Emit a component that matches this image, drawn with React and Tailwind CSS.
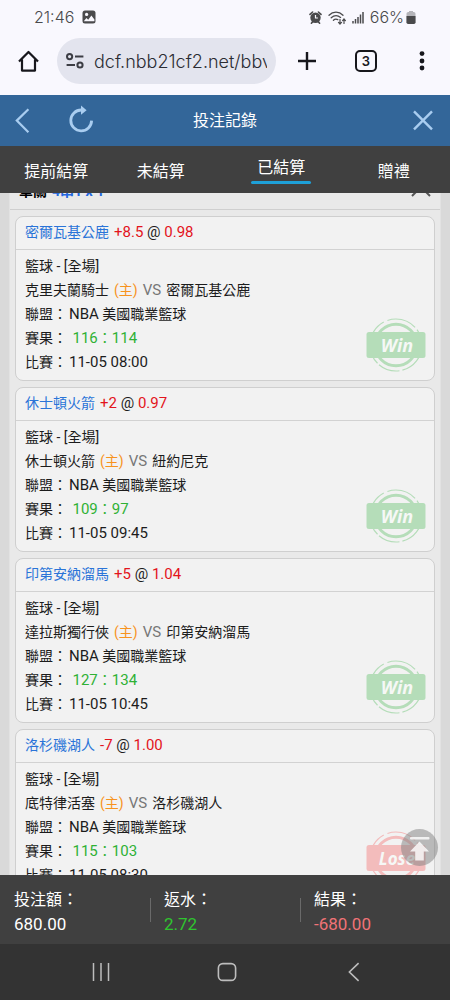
const TABS = [
  { label: "提前結算" },
  { label: "未結算", extra: "pr-4" },
  { label: "已結算", active: true },
  { label: "贈禮" },
];

const BETS = [
  {
    pick: "密爾瓦基公鹿",
    line: "+8.5",
    odds: "0.98",
    home: "克里夫蘭騎士",
    away: "密爾瓦基公鹿",
    score: ["116", "114"],
    time: "11-05 08:00",
    result: "Win",
  },
  {
    pick: "休士頓火箭",
    line: "+2",
    odds: "0.97",
    home: "休士頓火箭",
    away: "紐約尼克",
    score: ["109", "97"],
    time: "11-05 09:45",
    result: "Win",
  },
  {
    pick: "印第安納溜馬",
    line: "+5",
    odds: "1.04",
    home: "達拉斯獨行俠",
    away: "印第安納溜馬",
    score: ["127", "134"],
    time: "11-05 10:45",
    result: "Win",
  },
  {
    pick: "洛杉磯湖人",
    line: "-7",
    odds: "1.00",
    home: "底特律活塞",
    away: "洛杉磯湖人",
    score: ["115", "103"],
    time: "11-05 08:30",
    result: "Lose",
  },
];

const TOTALS = [
  { label: "投注額：", value: "680.00", color: "text-white" },
  { label: "返水：", value: "2.72", color: "text-[#2fc52f]" },
  { label: "結果：", value: "-680.00", color: "text-[#f07377]" },
];

function StatusBar() {
  return (
    <div className="flex h-[34px] items-center justify-between pl-[34px] pr-[34px] font-[Inter,sans-serif] text-[16px] font-light text-[#4a4a4c]">
      <div className="flex items-center gap-2">
        <span>21:46</span>
        <svg className="size-[14px]" viewBox="0 0 14 14">
          <rect x="0.5" y="0.5" width="13" height="13" rx="2.5" fill="#4a4a4c" />
          <circle cx="4.6" cy="4.4" r="1.6" fill="#f9f8fe" />
          <path d="M1.8 11.2 4.4 8l1.8 1.8L9.4 5.6l3 4v1.6z" fill="#f9f8fe" />
        </svg>
      </div>
      <div className="flex items-center gap-[6px]">
        <svg className="size-[13px]" viewBox="0 0 13 13">
          <path d="M1 3.4 3.6 1M12 3.4 9.4 1M2.4 12.2l1.4-1.6M10.6 12.2 9.2 10.6" stroke="#4a4a4c" strokeWidth="1.6" strokeLinecap="round" />
          <circle cx="6.5" cy="6.8" r="5.2" fill="#4a4a4c" />
          <path d="M6.5 4v3h2.4" fill="none" stroke="#f9f8fe" strokeWidth="1.2" />
        </svg>
        <svg className="h-[15px] w-[18px]" viewBox="0 0 18 15" fill="none" stroke="#4a4a4c" strokeWidth="1.3" strokeLinecap="round">
          <path d="M1 5.2C5 1.2 11 1.2 15 5.2M3.2 7.8c2.8-2.6 6.6-2.6 9.4-.4M5.4 10.2c1.3-1.2 3-1.4 4.4-.6" />
          <path d="M12 9.4v4.4m-1.5-1.4 1.5 1.6 1.5-1.6M16 13.4V9.2m-1.4 1.4L16 9l1.4 1.6" strokeWidth="1.2" />
        </svg>
        <svg className="h-[13px] w-[12px]" viewBox="0 0 12 13" stroke="#4a4a4c" strokeWidth="1.5">
          <path d="M1 10v2.6M3.5 8v4.6M6 6v6.6M8.5 3.4v9.2M11 1v11.6" />
        </svg>
        <div className="flex items-center gap-[2px]">
          <span>66%</span>
          <svg className="h-[13px] w-[10px]" viewBox="0 0 10 13">
            <path d="M3 0h4v1.2H3z" fill="#b5b5ba" />
            <rect x="0.5" y="1" width="9" height="12" rx="1.8" fill="#b5b5ba" />
            <path d="M0.5 5h9v6.2A1.8 1.8 0 0 1 7.7 13H2.3A1.8 1.8 0 0 1 .5 11.2z" fill="#4a4a4c" />
          </svg>
        </div>
      </div>
    </div>
  );
}

function BrowserBar() {
  return (
    <div className="flex h-[61px] items-start pl-[17px] pr-4 pt-1 text-[#17171c]">
      <button type="button" aria-label="Home" className="mt-[11px] size-6">
        <svg className="size-6" viewBox="0 0 24 24" fill="none" stroke="currentColor" strokeWidth="2.2" strokeLinejoin="round">
          <path d="M2 12.6 11.5 3l9.5 9.6M5 10.4v11.2h13V10.4" />
        </svg>
      </button>
      <label className="ml-4 flex h-[46px] min-w-0 flex-1 items-center gap-[10px] rounded-full bg-[#e3e4ee] px-[9px]">
        <svg className="size-[18px] shrink-0" viewBox="0 0 18 18" fill="none" stroke="#3c3d44" strokeWidth="2">
          <circle cx="3.6" cy="4.6" r="2.6" />
          <path d="M9 4.6h8.4M.6 13h8.4" />
          <circle cx="14" cy="13" r="2.6" />
        </svg>
        <input
          type="text"
          aria-label="Address"
          defaultValue="dcf.nbb21cf2.net/bbv"
          className="w-full min-w-0 bg-transparent font-[Inter,sans-serif] text-[18px] font-light text-[#2b2c33] outline-none"
        />
      </label>
      <button type="button" aria-label="New tab" className="ml-[19px] mt-[11px] size-6">
        <svg className="size-6" viewBox="0 0 24 24" stroke="currentColor" strokeWidth="2.4">
          <path d="M12 3v18M3 12h18" />
        </svg>
      </button>
      <button
        type="button"
        aria-label="Tabs"
        className="ml-9 mt-[12px] flex size-[22px] items-center justify-center rounded-[5px] border-2 border-current font-[Inter,sans-serif] text-[13px] font-semibold leading-none"
      >
        3
      </button>
      <button type="button" aria-label="More" className="ml-[33px] mt-[11px] size-6">
        <svg className="size-6" viewBox="0 0 24 24" fill="currentColor">
          <circle cx="12" cy="4.6" r="2.4" />
          <circle cx="12" cy="12" r="2.4" />
          <circle cx="12" cy="19" r="2.4" />
        </svg>
      </button>
    </div>
  );
}

function PageHeader() {
  return (
    <header className="flex h-[51px] shrink-0 items-center bg-[#336699] px-[10px] text-[#a9cdf0]">
      <div className="flex flex-1 items-center gap-[29px]">
        <button type="button" aria-label="返回" className="size-[28px]">
          <svg className="size-[28px]" viewBox="0 0 28 28" fill="none" stroke="currentColor" strokeWidth="2.2">
            <path d="M18.4 2.2 6.8 13.6l11.6 11.6" />
          </svg>
        </button>
        <button type="button" aria-label="重新整理" className="size-[28px]">
          <svg className="size-[28px] overflow-visible" viewBox="0 0 28 28" fill="none" stroke="currentColor" strokeWidth="2.8">
            <path d="M14.4 3A10.4 10.4 0 1 0 24.6 13.6" />
            <path d="M14 -1.6 19.6 3.2 14 7.8z" fill="currentColor" stroke="none" />
          </svg>
        </button>
      </div>
      <h1 className="text-[16px] text-white">投注記錄</h1>
      <div className="flex flex-1 justify-end">
        <button type="button" aria-label="關閉" className="mr-[3px] size-[28px]">
          <svg className="size-[28px]" viewBox="0 0 28 28" fill="none" stroke="currentColor" strokeWidth="2.4">
            <path d="m5 4.4 18 18M23 4.4 5 22.4" />
          </svg>
        </button>
      </div>
    </header>
  );
}

function Tabs() {
  return (
    <nav className="grid h-[47px] shrink-0 grid-cols-4 bg-[#404040] text-[16px] text-white">
      {TABS.map((tab) => (
        <button
          key={tab.label}
          type="button"
          className={`flex flex-col items-center justify-center ${tab.active ? "" : "pt-1"} ${tab.extra ?? ""}`}
        >
          <span className="leading-6">{tab.label}</span>
          {tab.active && <span className="mt-px h-[3px] w-[60px] rounded-full bg-[#1ea0d8]" />}
        </button>
      ))}
    </nav>
  );
}

function Stamp({ result }) {
  const win = result === "Win";
  const color = win ? "#b5ddb9" : "#f3bcbc";

  return (
    <svg className="absolute bottom-2 right-2 h-[54px] w-[60px]" viewBox="0 0 60 54" role="img" aria-label={result}>
      <circle cx="30" cy="27" r="26" fill="none" stroke={color} strokeWidth="1.2" strokeDasharray="34 3 22 2 48 4 30 3" />
      <circle cx="30" cy="27" r="20.8" fill="none" stroke={color} strokeWidth="3" />
      <rect x="0.5" y="14" width="59" height="26" rx="2.5" fill={color} />
      <text
        x="31"
        y="34"
        textAnchor="middle"
        fill="#f6f8f6"
        fontFamily="Open Sans, sans-serif"
        fontSize={win ? 18 : 17}
        fontWeight="700"
        fontStyle="italic"
      >
        {result}
      </text>
    </svg>
  );
}

function BetCard({ bet }) {
  return (
    <article className="relative rounded-lg border border-[#cfcfcf] bg-[#f2f2f2] text-[14px] text-[#1c1c1c]">
      <h2 className="flex gap-[5px] border-b border-[#d2d2d2] px-[9px] pb-px leading-[31px]">
        <span className="text-[#2a74d8]">{bet.pick}</span>
        <span className="text-[15px]">
          <span className="text-[#e3141c]">{bet.line}</span> @{" "}
          <span className="text-[#e3141c]">{bet.odds}</span>
        </span>
      </h2>
      <div className="px-[9px] pb-[6px] pt-1 leading-6">
        <p>籃球 - [全場]</p>
        <p className="flex gap-[5px]">
          <span>{bet.home}</span>
          <span className="text-[#f7931e]">(主)</span>
          <span className="text-[15px] text-[#777777]">VS</span>
          <span>{bet.away}</span>
        </p>
        <p>
          <span className="mr-0.5">聯盟：</span>
          <span className="text-[15px]">NBA</span> 美國職業籃球
        </p>
        <p>
          <span className="mr-0.5">賽果：</span>{" "}
          <span className="text-[15px] text-[#2fb135]">
            {bet.score[0]}
            <span className="text-[14px]">：</span>
            {bet.score[1]}
          </span>
        </p>
        <p>
          <span className="mr-0.5">比賽：</span>
          <span className="text-[15px]">{bet.time}</span>
        </p>
      </div>
      <Stamp result={bet.result} />
    </article>
  );
}

function Totals() {
  return (
    <dl className="grid h-[69px] shrink-0 grid-cols-3 bg-[#404040] pt-[13px] leading-6">
      {TOTALS.map((item, i) => (
        <div key={item.label} className="flex">
          <span className={`mt-[10px] h-6 w-px ${i ? "bg-[#6a6a6a]" : ""}`} />
          <div className="pl-[13px]">
            <dt className="text-[16px] text-white">{item.label}</dt>
            <dd className={`text-[17px] ${item.color}`}>{item.value}</dd>
          </div>
        </div>
      ))}
    </dl>
  );
}

function SystemNav() {
  return (
    <nav className="grid h-[56px] shrink-0 grid-cols-3 items-center justify-items-center bg-[#333333] pl-[38px] pr-[33px] text-[#bdbdbd]">
      <button type="button" aria-label="Recents">
        <svg className="size-5" viewBox="0 0 20 20" stroke="currentColor" strokeWidth="1.5">
          <path d="M2.5 1v18M10 1v18M17.5 1v18" />
        </svg>
      </button>
      <button type="button" aria-label="Home">
        <svg className="size-5" viewBox="0 0 20 20" fill="none" stroke="currentColor" strokeWidth="1.6">
          <rect x="1.4" y="1.6" width="17.2" height="16.8" rx="4.5" />
        </svg>
      </button>
      <button type="button" aria-label="Back">
        <svg className="size-5" viewBox="0 0 20 20" fill="none" stroke="currentColor" strokeWidth="1.6">
          <path d="M14.6 1.2 5.4 10l9.2 8.8" />
        </svg>
      </button>
    </nav>
  );
}

export default function App() {
  return (
    <div className="flex h-screen flex-col overflow-hidden font-[Roboto,'Noto_Sans_CJK_TC',sans-serif]">
      <div className="shrink-0 bg-[#f9f8fe]">
        <StatusBar />
        <BrowserBar />
      </div>
      <PageHeader />
      <Tabs />

      <main className="relative min-h-0 flex-1 overflow-hidden bg-[#d9d9d9] px-[9px]">
        {/* list is scrolled, so the parlay row is half under the tabs */}
        <section className="-mt-5 border-x border-[#e2e2e2] bg-[#e9e9e9]">
          <div className="flex h-[37px] items-center justify-between border-b border-[#cfcfcf] px-[9px]">
            <p className="flex gap-[5px] text-[14px] font-bold text-black">
              <span>單關</span>
              <span className="text-[#2468e0]">4串1 x 1</span>
            </p>
            <button type="button" aria-label="收合">
              <svg className="size-5" viewBox="0 0 20 20" fill="none" stroke="#555555" strokeWidth="2">
                <path d="m1 15 9-9 9 9" />
              </svg>
            </button>
          </div>
          <div className="space-y-[6px] px-[5px] py-[6px]">
            {BETS.map((bet) => (
              <BetCard key={bet.pick + bet.time} bet={bet} />
            ))}
          </div>
        </section>

        <button
          type="button"
          aria-label="回到頂部"
          className="absolute bottom-[9px] right-3 size-[37px] rounded-full bg-[#808080]/50"
        >
          <svg className="size-[37px]" viewBox="0 0 37 37" fill="#ffffff" fillOpacity="0.8">
            <rect x="9" y="8" width="19.5" height="2.6" rx="1" />
            <path d="M18.5 12.6 28 22.4h-5.2v9.2h-8.6v-9.2H9z" />
          </svg>
        </button>
      </main>

      <Totals />
      <SystemNav />
    </div>
  );
}
